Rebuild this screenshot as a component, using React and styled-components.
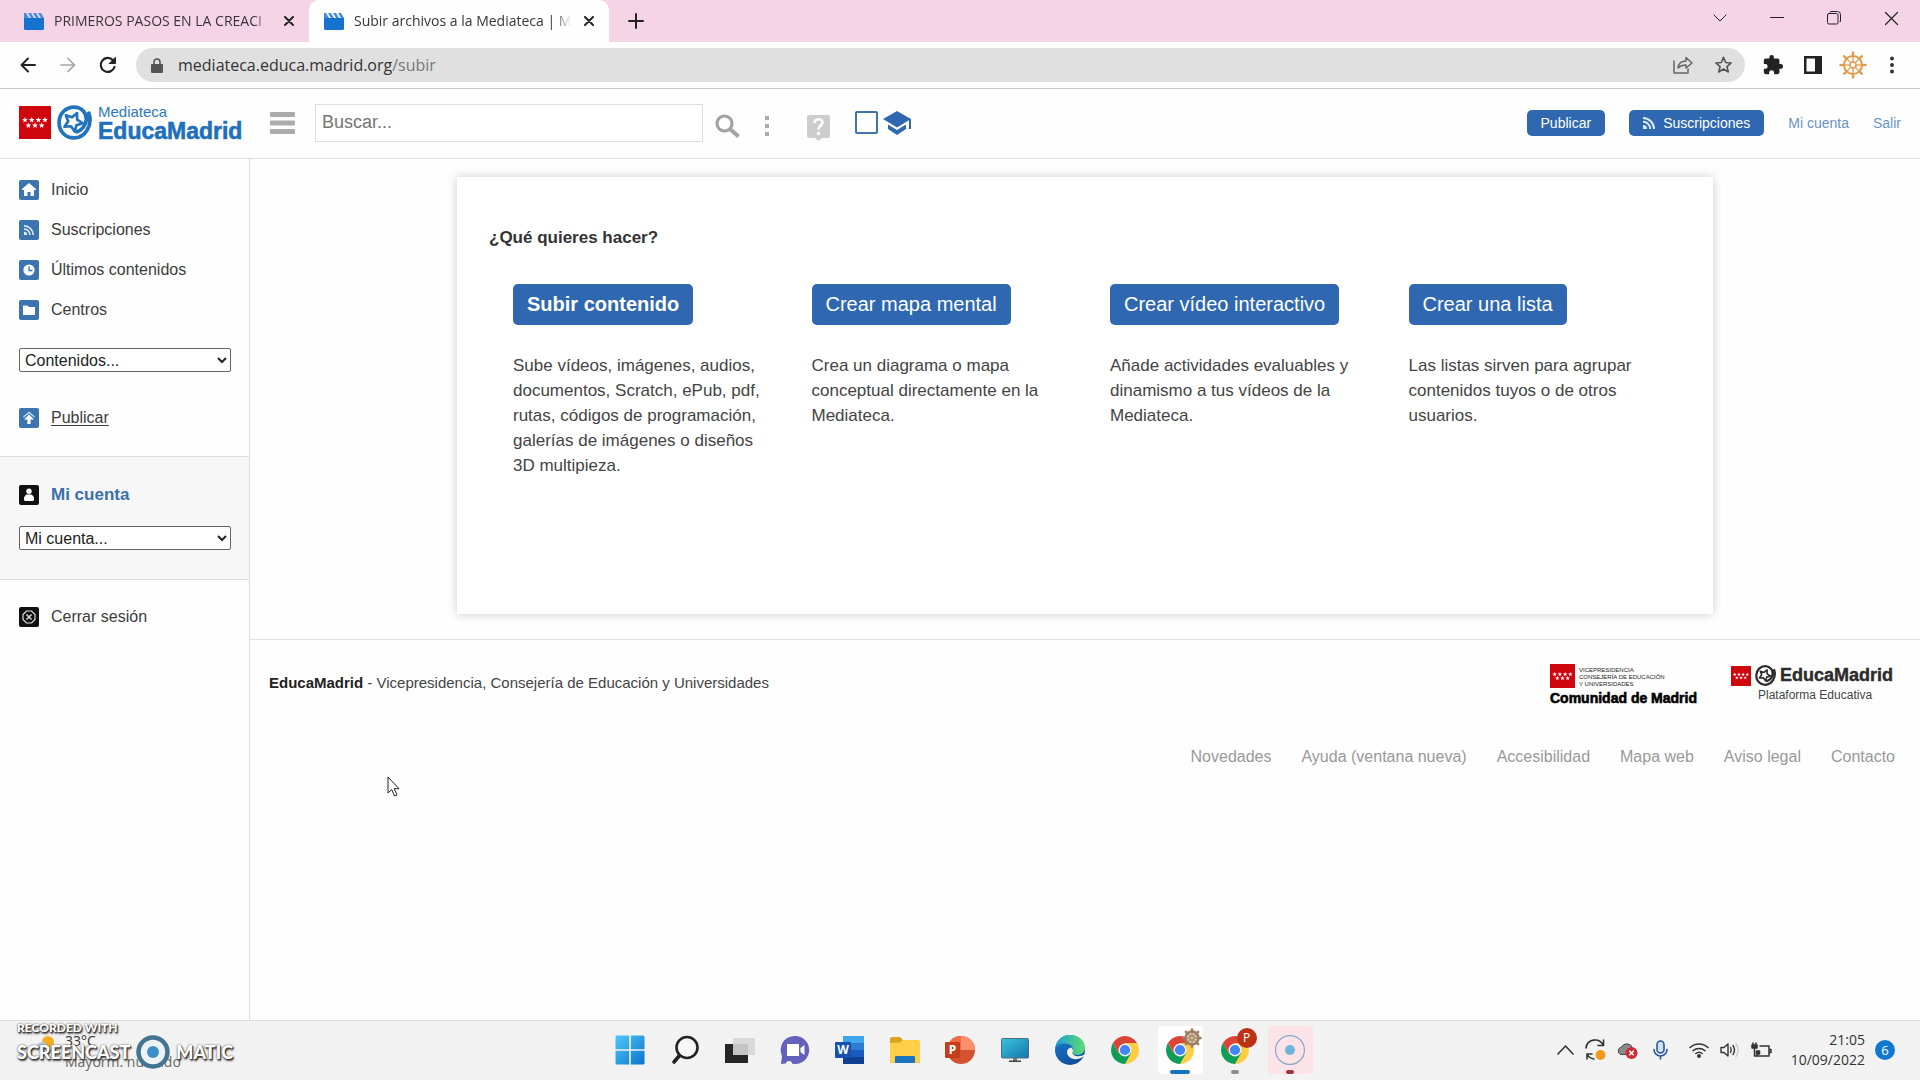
import React from "react";
import styled, { createGlobalStyle, css } from "styled-components";

const sans = `"Liberation Sans", Arial, sans-serif`;
const system = `"Open Sans", "Noto Sans", sans-serif`;
const blue = "#2f68b0";

const GlobalStyle = createGlobalStyle`
  *, *::before, *::after { box-sizing: border-box; }
  body { margin: 0; background: #fefefe; color: #3c3c3c; font: 16px/24px ${sans}; }
  a { color: inherit; text-decoration: none; }
  p, h1 { margin: 0; padding: 0; }
  svg { display: block; flex: none; }
`;

const Screen = styled.div`
  position: relative;
  display: flex;
  flex-direction: column;
  min-height: 100vh;
`;

/* ---------- browser ---------- */

const TabStrip = styled.div`
  display: flex;
  height: 42px;
  background: #f5d5e5;
  font-family: ${system};
`;

const Tab = styled.div`
  display: flex;
  align-items: center;
  width: ${(p) => (p.$active ? 300 : 309)}px;
  padding: 0 14px 0 ${(p) => (p.$active ? 15 : 24)}px;
  border-radius: 10px 10px 0 0;
  background: ${(p) => (p.$active ? "#fefefe" : "transparent")};
`;

const TabTitle = styled.span`
  flex: 1;
  min-width: 0;
  margin: 0 12px 0 10px;
  overflow: hidden;
  white-space: nowrap;
  font-size: 14px;
  line-height: 20px;
  color: #3b3338;
  mask-image: linear-gradient(to right, #000 92%, transparent);
`;

const IconButton = styled.button`
  display: flex;
  align-items: center;
  justify-content: center;
  flex: none;
  width: ${(p) => p.$w || 24}px;
  height: ${(p) => p.$h || 24}px;
  padding: 0;
  border: 0;
  background: none;
  color: ${(p) => p.$color || "#222"};
`;

const WindowControls = styled.div`
  display: flex;
  margin-left: auto;
  height: 36px;
`;

const Toolbar = styled.div`
  display: flex;
  align-items: center;
  height: 47px;
  padding: 0 9px 0 8px;
  background: #fefefe;
  border-bottom: 1px solid #c9c9c9;
`;

const AddressBar = styled.div`
  display: flex;
  align-items: center;
  flex: 1;
  height: 34px;
  margin: 0 8px;
  padding: 0 2px 0 14px;
  border-radius: 17px;
  background: #e0e0e0;
`;

const AddressText = styled.a`
  flex: 1;
  margin-left: 14px;
  font: 16px/24px ${system};
  color: #333;
  span { color: #777; }
`;

/* ---------- site header ---------- */

const Header = styled.header`
  display: flex;
  align-items: center;
  height: 70px;
  padding: 0 19px 2px;
  border-bottom: 1px solid #dedede;
`;

const Brand = styled.a`
  display: flex;
  align-items: center;
  gap: 6px;
  width: 230px;
`;

const BrandText = styled.span`
  display: flex;
  flex-direction: column;
  font-size: 15px;
  line-height: 16px;
  color: #2c78bd;
  strong { font-size: 23px; line-height: 22px; color: #1f70ba; -webkit-text-stroke: 0.6px #1f70ba; }
`;

const SearchForm = styled.form`
  display: flex;
  align-items: center;
`;

const SearchInput = styled.input`
  width: 388px;
  height: 38px;
  padding: 0 6px;
  border: 1px solid #dcdcdc;
  background: #fff;
  font: 18px/24px ${sans};
  color: #666;
  &::placeholder { color: #757575; opacity: 1; }
`;

const HeaderTools = styled.div`
  display: flex;
  align-items: center;
  gap: 25px;
  margin-left: 11px;
  padding-top: 6px;
`;

const HelpButton = styled(IconButton)`
  margin-left: 11px;
  padding-top: 11px;
`;

const EduFilter = styled.label`
  display: flex;
  align-items: center;
  gap: 5px;
  input {
    appearance: none;
    width: 23px;
    height: 23px;
    margin: 0;
    border: 2px solid #3f74ad;
    border-radius: 2px;
    background: #fff;
  }
`;

const UserNav = styled.nav`
  display: flex;
  align-items: center;
  gap: 24px;
  margin-left: auto;
  font-size: 14px;
  line-height: 26px;
  color: #6b93c2;
`;

const solid = css`
  background: ${blue};
  color: #fff;
  border-radius: 5px;
`;

const NavButton = styled.a`
  ${solid}
  display: flex;
  align-items: center;
  gap: 8px;
  height: 26px;
  padding: 0 14px;
`;

/* ---------- body ---------- */

const Body = styled.div`
  display: flex;
  flex: 1;
`;

const Sidebar = styled.aside`
  width: 250px;
  flex: none;
  border-right: 1px solid #dcdcdc;
`;

const Section = styled.div`
  padding: ${(p) => p.$pad};
  background: ${(p) => (p.$tint ? "#f7f7f7" : "transparent")};
  border-bottom: ${(p) => (p.$last ? "0" : "1px solid #dedede")};
`;

const MenuLink = styled.a`
  display: flex;
  align-items: center;
  gap: 12px;
  height: 24px;
  margin-bottom: ${(p) => p.$gap || 0}px;
  text-decoration: ${(p) => (p.$current ? "underline" : "none")};
  text-underline-offset: 2px;
  color: #3c3c3c;
`;

const AccountLink = styled(MenuLink)`
  font-weight: bold;
  font-size: 17px;
  color: #3a70ab;
`;

const Tile = styled.span`
  display: grid;
  place-items: center;
  width: 20px;
  height: 20px;
  border-radius: 2px;
  background: ${(p) => (p.$dark ? "#111" : "#3c74b0")};
`;

const Select = styled.select`
  display: block;
  width: 100%;
  height: 24px;
  margin-bottom: ${(p) => p.$gap}px;
  padding: 0 4px 0 1px;
  border: 1px solid #666;
  border-radius: 2px;
  background: #fff;
  font: 16px/20px ${sans};
  color: #222;
`;

const Main = styled.main`
  flex: 1;
  min-width: 0;
`;

const Card = styled.section`
  max-width: 1256px;
  min-height: 437px;
  margin: 18px auto 25px;
  padding: 49px 30px 49px 32px;
  background: #fff;
  box-shadow: 0 0 10px rgba(0, 0, 0, 0.2);
`;

const CardTitle = styled.h1`
  margin-bottom: 34px;
  font-size: 17px;
  line-height: 24px;
  color: #333;
`;

const Options = styled.div`
  display: grid;
  grid-template-columns: repeat(4, 1fr);
`;

const Option = styled.div`
  padding: 0 24px;
  p { margin-top: 28px; font-size: 17px; line-height: 25px; color: #444; }
`;

const OptionButton = styled.button`
  ${solid}
  height: 41px;
  padding: 0 14px 2px;
  border: 0;
  white-space: nowrap;
  font: ${(p) => (p.$strong ? "bold" : "normal")} 20px/24px ${sans};
`;

const Footer = styled.footer`
  padding: 24px 25px 0 19px;
  border-top: 1px solid #e2e2e2;
`;

const FooterTop = styled.div`
  display: flex;
  justify-content: space-between;
  margin-bottom: 37px;
  p { margin-top: 7px; font-size: 15px; color: #444; }
  strong { color: #222; }
`;

const FooterLogos = styled.div`
  display: flex;
  gap: 34px;
`;

const Regional = styled.a`
  display: flex;
  flex-direction: column;
  width: 147px;
  strong { font-size: 14px; line-height: 20px; white-space: nowrap; color: #000; -webkit-text-stroke: 0.6px #000; }
`;

const RegionalTop = styled.span`
  display: flex;
  align-items: flex-end;
  gap: 4px;
  small { font-size: 6px; line-height: 7px; white-space: nowrap; color: #222; }
`;

const Platform = styled.a`
  display: flex;
  flex-direction: column;
  width: 164px;
  padding-top: 1px;
  small { margin-left: 27px; font-size: 12px; line-height: 18px; color: #444; }
`;

const PlatformTop = styled.span`
  display: flex;
  align-items: center;
  gap: 4px;
  height: 21px;
  strong { font-size: 18px; line-height: 21px; color: #2b2b2b; -webkit-text-stroke: 0.4px #2b2b2b; }
`;

const FooterLinks = styled.nav`
  display: flex;
  justify-content: flex-end;
  gap: 30px;
  color: #999;
`;

const Cursor = styled.svg`
  position: absolute;
  left: 387px;
  top: 776px;
`;

/* ---------- taskbar ---------- */

const Taskbar = styled.div`
  position: relative;
  display: grid;
  grid-template-columns: 1fr auto 1fr;
  height: 60px;
  background: #f2f2f2;
  border-top: 1px solid #dcdcdc;
  font-family: ${system};
  color: #333;
`;

const Weather = styled.div`
  display: flex;
  gap: 8px;
  padding: 9px 0 0 35px;
  font-size: 14px;
  line-height: 21px;
  svg { margin-top: 6px; }
  span { display: block; }
  span + span { color: #666; }
`;

const Watermark = styled.div`
  position: absolute;
  left: 17px;
  top: 0;
  font-family: Lato, ${system};
  font-weight: 900;
  color: #fff;
  text-shadow: 1px 1px 1px #333, 0 0 2px #444, 1px 2px 2px #555;
`;

const WatermarkSmall = styled.div`
  font-size: 12px;
  line-height: 14px;
`;

const WatermarkRow = styled.div`
  display: flex;
  align-items: center;
  gap: 5px;
  height: 34px;
  font-size: 18px;
`;

const Apps = styled.div`
  display: flex;
  align-items: center;
  padding-bottom: 2px;
`;

const AppButton = styled.button`
  position: relative;
  display: grid;
  place-items: center;
  width: 45px;
  height: 48px;
  margin: 0 5px;
  padding: 0;
  border: 0;
  border-radius: 4px;
  background: ${(p) => p.$bg || "transparent"};
`;

const Running = styled.span`
  position: absolute;
  bottom: 0;
  left: calc(50% - ${(p) => p.$w / 2}px);
  width: ${(p) => p.$w}px;
  height: 4px;
  border-radius: 2px;
  background: ${(p) => p.$color};
`;

const Badge = styled.span`
  position: absolute;
  top: 2px;
  right: 1px;
  width: 20px;
  height: 20px;
  border-radius: 50%;
  background: ${(p) => p.$color || "transparent"};
  font: 12px/20px ${system};
  color: #fff;
`;

const Tray = styled.div`
  display: flex;
  align-items: center;
  justify-content: flex-end;
  padding: 0 25px 1px 0;
`;

const TrayIcons = styled.div`
  display: flex;
  align-items: center;
  gap: 11px;
  margin-right: 19px;
`;

const Clock = styled.time`
  font-size: 14px;
  line-height: 20px;
  text-align: right;
  span { display: block; }
`;

const Count = styled.span`
  width: 20px;
  height: 20px;
  margin-left: 10px;
  border-radius: 50%;
  background: #0f78d0;
  font-size: 13px;
  line-height: 20px;
  text-align: center;
  color: #fff;
`;

/* ---------- drawings ---------- */

const line = { fill: "none", stroke: "currentColor", strokeLinecap: "round", strokeLinejoin: "round" };

const Clapper = () => (
  <svg width="20" height="17" viewBox="0 0 20 17">
    <path fill="#1672cf" d="M0 5h20v10.500q0 1.500-1.500 1.500h-17Q0 17 0 15.500z" />
    <path fill="#3f8fdc" d="M0 0h2l3 5H0zM4 0h3l3 5H7zM9 0h3l3 5h-3zM14 0h3l3 5h-3z" />
  </svg>
);

const Cross = ({ size = 10, w = 2 }) => (
  <svg width={size} height={size} viewBox="0 0 10 10" {...line} strokeWidth={w}>
    <path d="M1 1l8 8M9 1l-8 8" />
  </svg>
);

const starPath = (cx, cy, r, inner, rot = -90) => {
  let d = "";
  for (let i = 0; i < 10; i++) {
    const a = ((rot + i * 36) * Math.PI) / 180;
    const q = i % 2 ? inner : r;
    d += `${i ? "L" : "M"}${(cx + q * Math.cos(a)).toFixed(2)} ${(cy + q * Math.sin(a)).toFixed(2)}`;
  }
  return d + "z";
};

const Flag = ({ w, h }) => (
  <svg width={w} height={h} viewBox="0 0 32 33" preserveAspectRatio="none">
    <rect width="32" height="33" fill="#d0060f" />
    {[6, 12.7, 19.4, 26].map((x) => <path key={x} fill="#fff" d={starPath(x, 14, 3, 1.3)} />)}
    {[9.3, 16, 22.7].map((x) => <path key={x} fill="#fff" d={starPath(x, 19.5, 3, 1.3)} />)}
  </svg>
);

const Swirl = ({ size, color }) => (
  <svg width={size} height={size} viewBox="0 0 34 34" fill="none" stroke={color} strokeLinecap="round" strokeLinejoin="round">
    <path strokeWidth="3.600" d="M31 8C35 20 27 32 16.500 32 8 32 2 25.500 2 17S8.500 2 16.500 2C24 2 29 8 28.500 14.500 28 20 24 24.500 19.500 26" />
    <path strokeWidth="2.600" d={starPath(15.5, 16.5, 9.5, 4.6, -65)} />
  </svg>
);

const Rss = ({ size }) => (
  <svg width={size} height={size} viewBox="0 0 12 12" fill="none" stroke="#dcebfa" strokeWidth="2">
    <path d="M0 1a11 11 0 0 1 11 11M0 4.800A7.200 7.200 0 0 1 7.200 12" />
    <path fill="#dcebfa" stroke="none" d="M0 8a4 4 0 0 1 4 4H0z" />
  </svg>
);

const tileIcons = {
  home: <path fill="#fff" d="M7 0l7 6v1h-2v6H8.500V9h-3v4H2V7H0V6z" />,
  clock: <><circle cx="7" cy="7" r="5.600" fill="#fff" /><path d="M7 3.500V7.500h3.500" fill="none" stroke="#3c74b0" strokeWidth="1.300" /></>,
  folder: <path fill="#fff" d="M1 2.500h4.500L7 4h6v8H1z" />,
  up: <><path d="M1.500 6L7 1.500 12.500 6" fill="none" stroke="#bcd6f0" strokeWidth="1.500" /><path fill="#fff" d="M7 3.500l5 5H8.600V13H5.400V8.500H2z" /></>,
  user: <><circle cx="7" cy="3.200" r="2.700" fill="#fff" /><path fill="#fff" d="M4.500 6.500h5Q12 8 12 10v1.500q0 1.500-1.500 1.500h-7Q2 13 2 11.500V10Q2 8 4.500 6.500z" /></>,
  close: <g fill="none" stroke="#ddd" strokeWidth="1.200"><path d="M4.500 1h5L13 4.500v5L9.500 13h-5L1 9.500v-5z" /><path strokeWidth="1.500" d="M4.500 4.500l5 5M9.500 4.500l-5 5" /></g>,
};

const MenuIcon = ({ name, dark }) => (
  <Tile $dark={dark}>
    {name === "rss" ? <Rss size={10} /> : <svg width="14" height="14" viewBox="0 0 14 14">{tileIcons[name]}</svg>}
  </Tile>
);

const Helm = ({ size, color, bold }) => (
  <svg width={size} height={size} viewBox="0 0 28 28" fill="none" stroke={color} strokeWidth={bold ? 3.5 : 2}>
    <circle cx="14" cy="14" r="9" fill={bold ? "#d9c4a8" : "none"} />
    <circle cx="14" cy="14" r="3" strokeWidth="1.500" />
    {[0, 45, 90, 135, 180, 225, 270, 315].map((a) => (
      <g key={a} transform={`rotate(${a} 14 14)`}><path strokeWidth="1.300" d="M14 11V5" /><path strokeWidth={bold ? 3.5 : 2.3} d="M14 5V0.500" /></g>
    ))}
  </svg>
);

const Chrome = () => (
  <svg width="28" height="28" viewBox="0 0 28 28">
    <path fill="#ffcd40" d="M14 7h12.120A14 14 0 0 1 14 28l6-10.500z" />
    <path fill="#0f9d58" d="M1.880 7A14 14 0 0 0 14 28l6-10.500L14 14 8 17.500z" />
    <path fill="#db4437" d="M1.880 7L8 17.500 14 7h12.120A14 14 0 0 0 1.880 7z" />
    <circle cx="14" cy="14" r="6.500" fill="#f2f2f2" />
    <circle cx="14" cy="14" r="5.100" fill="#4285f4" />
  </svg>
);

const TaskIcon = ({ name }) => {
  if (name === "chrome") return <Chrome />;
  const art = {
    windows: (
      <>
        <defs><linearGradient id="win" x2="1" y2="1"><stop stopColor="#52c8f8" /><stop offset="1" stopColor="#0873d0" /></linearGradient></defs>
        <path fill="url(#win)" d="M0.500 2q0-1.500 1.500-1.500h12.200v13.700H0.500zM15.800 0.500H28q1.500 0 1.500 1.500v12.200H15.800zM0.500 15.800h13.700v13.700H2q-1.500 0-1.500-1.500zM15.800 15.800h13.700V28q0 1.500-1.500 1.500H15.800z" />
      </>
    ),
    search: <g fill="none" stroke="#222" strokeLinecap="round"><circle cx="17" cy="12.500" r="10.500" strokeWidth="2.600" fill="#f7f7f7" /><path strokeWidth="3.600" d="M9.500 20.500L4 27" /></g>,
    tasks: <><path fill="#262626" d="M0 9h23v19H0z" /><path fill="#d6d6d6" fillOpacity=".9" d="M8 3h22v17H8z" /></>,
    chat: (
      <>
        <path fill="#6461bd" d="M15 1a14 14 0 1 1-5 27L1 29l1-8A14 14 0 0 1 15 1z" />
        <path fill="#fff" d="M7 9h12v12H7zM20.500 13l4-3v10l-4-3z" /><path fill="#fff" d="M6 29a3 3 0 0 1 6 0z" />
      </>
    ),
    word: (
      <>
        <path fill="#41a5ee" d="M8 1h21v7H8z" /><path fill="#2b7cd3" d="M8 8h21v7H8z" /><path fill="#185abd" d="M8 15h21v7H8z" /><path fill="#103f91" d="M8 22h21v7H8z" />
        <rect y="7" width="16" height="16" rx="1" fill="#1552ac" />
        <text x="8" y="19" textAnchor="middle" fontFamily="Open Sans" fontSize="12" fontWeight="700" fill="#fff">W</text>
      </>
    ),
    folder: <><path fill="#dca321" d="M0 4q0-2 2-2h8l3 3v6H0z" /><path fill="#ffcf48" d="M0 8l10-0.500L13 5h15q2 0 2 2v21H0z" /><path fill="#1b74bd" d="M5 22q0-1 1-1h18q1 0 1 1v6H5z" /></>,
    ppt: (
      <>
        <circle cx="16" cy="15" r="14" fill="#d35230" /><path fill="#ff8f6b" d="M16 1a14 14 0 0 1 14 14H16z" /><path fill="#ed6c47" d="M16 1v14H2A14 14 0 0 1 16 1z" />
        <rect y="7" width="15" height="16" rx="1" fill="#c43e1c" />
        <text x="7.500" y="19" textAnchor="middle" fontFamily="Open Sans" fontSize="12" fontWeight="700" fill="#fff">P</text>
      </>
    ),
    monitor: (
      <>
        <defs><linearGradient id="mon" x2="1" y2="1"><stop stopColor="#3bc2dd" /><stop offset="1" stopColor="#1278ad" /></linearGradient></defs>
        <rect x="1.500" y="3.500" width="27" height="19.500" rx="1" fill="url(#mon)" stroke="#4f6e7c" /><path fill="#777" d="M13 23h4v3h-4z" /><path fill="#444" d="M9 25.500h12V27H9z" />
      </>
    ),
    edge: (
      <>
        <defs>
          <linearGradient id="ea" x2="1"><stop stopColor="#1f9ddb" /><stop offset="1" stopColor="#5fdc6e" /></linearGradient>
          <linearGradient id="eb" x2="0.500" y2="1"><stop stopColor="#1a80d0" /><stop offset="1" stopColor="#0f4f9e" /></linearGradient>
        </defs>
        <circle cx="15" cy="15" r="15" fill="url(#eb)" />
        <path fill="url(#ea)" d="M0.500 12C2 4 8 0 15 0c9 0 15 6 15 12.500 0 5-4 7.500-8 7.500-3 0-5-1-4.500-2.500C19 15 18 9 11 8.500 6 8 2 10 0.500 12z" />
        <path fill="#f2f2f2" d="M16 12.500c-4 1-5 5-3 8 3 4.500 10 5 15.500 1l2 1V19C26 22.500 17 22 17.500 17.500c1-1 .500-4-1.500-5z" />
      </>
    ),
    record: <><circle cx="15" cy="15" r="14.500" fill="none" stroke="#88a9cc" strokeWidth="1.300" /><circle cx="15" cy="15" r="5" fill="#6cb6dd" /></>,
  };
  return <svg width="30" height="30" viewBox="0 0 30 30">{art[name]}</svg>;
};

/* ---------- content ---------- */

const menu = [
  ["home", "Inicio"],
  ["rss", "Suscripciones"],
  ["clock", "Últimos contenidos"],
  ["folder", "Centros"],
];

const options = [
  ["Subir contenido", "Sube vídeos, imágenes, audios, documentos, Scratch, ePub, pdf, rutas, códigos de programación, galerías de imágenes o diseños 3D multipieza."],
  ["Crear mapa mental", "Crea un diagrama o mapa conceptual directamente en la Mediateca."],
  ["Crear vídeo interactivo", "Añade actividades evaluables y dinamismo a tus vídeos de la Mediateca."],
  ["Crear una lista", "Las listas sirven para agrupar contenidos tuyos o de otros usuarios."],
];

const footerLinks = ["Novedades", "Ayuda (ventana nueva)", "Accesibilidad", "Mapa web", "Aviso legal", "Contacto"];
const apps = ["windows", "search", "tasks", "chat", "word", "folder", "ppt", "monitor", "edge", "chrome"];

function BrowserBar() {
  return (
    <>
      <TabStrip>
        <Tab>
          <Clapper />
          <TabTitle>PRIMEROS PASOS EN LA CREACI</TabTitle>
          <IconButton aria-label="Cerrar pestaña" $w={12}><Cross /></IconButton>
        </Tab>
        <Tab $active>
          <Clapper />
          <TabTitle>Subir archivos a la Mediateca | M</TabTitle>
          <IconButton aria-label="Cerrar pestaña" $w={12}><Cross /></IconButton>
        </Tab>
        <IconButton aria-label="Nueva pestaña" $w={54} $h={42}>
          <svg width="16" height="16" viewBox="0 0 16 16" {...line} strokeWidth="2"><path d="M8 1v14M1 8h14" /></svg>
        </IconButton>
        <WindowControls>
          <IconButton aria-label="Buscar pestañas" $w={57} $h={36}><svg width="14" height="8" viewBox="0 0 14 8" {...line}><path d="M1 1l6 6 6-6" /></svg></IconButton>
          <IconButton aria-label="Minimizar" $w={57} $h={36}><svg width="14" height="2" viewBox="0 0 14 2"><path fill="currentColor" d="M0 0h14v1H0z" /></svg></IconButton>
          <IconButton aria-label="Restaurar" $w={57} $h={36}><svg width="14" height="14" viewBox="0 0 14 14" {...line}><rect x=".5" y="2.500" width="10.500" height="10.500" rx="1.500" /><path d="M3 1q0-.5 1-.5h6.500q3 0 3 3V10q0 1-.5 1" /></svg></IconButton>
          <IconButton aria-label="Cerrar" $w={58} $h={36}><Cross size={15} w={0.8} /></IconButton>
        </WindowControls>
      </TabStrip>
      <Toolbar>
        <IconButton aria-label="Atrás" $w={40}><svg width="16" height="16" viewBox="0 0 16 16" {...line} strokeWidth="2"><path d="M15 8H1.500M8 1.500L1.500 8 8 14.500" /></svg></IconButton>
        <IconButton aria-label="Adelante" $w={40} $color="#a5a5a5"><svg width="16" height="16" viewBox="0 0 16 16" {...line} strokeWidth="1.700"><path d="M1 8h13.500M8 1.500L14.500 8 8 14.500" /></svg></IconButton>
        <IconButton aria-label="Recargar" $w={40}><svg width="18" height="18" viewBox="0 0 18 18" {...line} strokeWidth="2.200"><path d="M15.500 11A7 7 0 1 1 14 4.200" /><path fill="currentColor" strokeWidth="1" d="M16.500 1.500v6h-6z" /></svg></IconButton>
        <AddressBar>
          <svg width="14" height="15" viewBox="0 0 14 15"><path fill="#555" d="M2 6h10q1 0 1 1v7q0 1-1 1H2q-1 0-1-1V7q0-1 1-1z" /><path fill="none" stroke="#555" strokeWidth="1.600" d="M4 6V4a3 3 0 0 1 6 0v2" /></svg>
          <AddressText href="#">mediateca.educa.madrid.org<span>/subir</span></AddressText>
          <IconButton aria-label="Compartir" $w={40} $color="#666"><svg width="20" height="18" viewBox="0 0 20 18" {...line} strokeWidth="1.500"><path d="M1 5v12h14v-4M5 12c.5-5 4-7 8-7V1.500l6 5.500-6 5V9c-4 0-6 1-8 3z" /></svg></IconButton>
          <IconButton aria-label="Añadir a marcadores" $w={40} $color="#555"><svg width="19" height="18" viewBox="0 0 20 20" {...line} strokeWidth="1.800"><path d={starPath(10, 10.5, 9, 4)} /></svg></IconButton>
        </AddressBar>
        <IconButton aria-label="Extensiones" $w={40}><svg width="22" height="22" viewBox="0 0 24 24"><path fill="#222" d="M20.500 11H19V7a2 2 0 0 0-2-2h-4V3.500a2.500 2.500 0 0 0-5 0V5H4a2 2 0 0 0-2 2v3.800h1.500a2.700 2.700 0 0 1 0 5.400H2V20a2 2 0 0 0 2 2h3.800v-1.500a2.700 2.700 0 0 1 5.400 0V22H17a2 2 0 0 0 2-2v-4h1.500a2.500 2.500 0 0 0 0-5z" /></svg></IconButton>
        <IconButton aria-label="Panel lateral" $w={40}><svg width="18" height="18" viewBox="0 0 18 18"><path fill="#222" fillRule="evenodd" d="M0 0h18v18H0zM2.500 2.500v13h8.500v-13z" /></svg></IconButton>
        <IconButton aria-label="Perfil" $w={40}><Helm size={28} color="#e09a4c" /></IconButton>
        <IconButton aria-label="Menú" $w={38}><svg width="4" height="18" viewBox="0 0 4 18" fill="#333"><circle cx="2" cy="2.500" r="2" /><circle cx="2" cy="9" r="2" /><circle cx="2" cy="15.500" r="2" /></svg></IconButton>
      </Toolbar>
    </>
  );
}

function SiteHeader() {
  return (
    <Header>
      <Brand href="#" aria-label="Mediateca EducaMadrid">
        <Flag w={32} h={33} />
        <Swirl size={35} color="#2272bd" />
        <BrandText>Mediateca<strong>EducaMadrid</strong></BrandText>
      </Brand>
      <IconButton aria-label="Menú principal" $w={66}>
        <svg width="25" height="22" viewBox="0 0 25 22" fill="#ababab"><rect width="25" height="5" rx="1" /><rect y="8.500" width="25" height="5" rx="1" /><rect y="17" width="25" height="5" rx="1" /></svg>
      </IconButton>
      <SearchForm>
        <SearchInput aria-label="Buscar" type="text" placeholder="Buscar..." />
        <HeaderTools>
          <IconButton type="button" aria-label="Buscar" $w={26}>
            <svg width="25" height="24" viewBox="0 0 25 24" fill="none" stroke="#a3a3a3"><circle cx="9.500" cy="9.500" r="7.500" strokeWidth="3.200" /><path strokeWidth="4" d="M15 15l8.500 7.500" /></svg>
          </IconButton>
          <IconButton type="button" aria-label="Búsqueda avanzada" $w={5}>
            <svg width="5" height="20" viewBox="0 0 5 20" fill="#aaa"><path d="M0 0h4v4H0zM0 8h4v4H0zM0 16h4v4H0z" /></svg>
          </IconButton>
        </HeaderTools>
      </SearchForm>
      <HelpButton aria-label="Ayuda" $w={74} $h={36}>
        <svg width="23" height="26" viewBox="0 0 23 26"><path fill="#cdcdcd" d="M2 0h19q2 0 2 2v19q0 2-2 2h-6l-3.500 3L8 23H2q-2 0-2-2V2q0-2 2-2z" /><path fill="none" stroke="#fff" strokeWidth="2.600" d="M7.500 8c0-5 8-5 8-.500 0 3-4 3-4 7" /><path fill="#fff" d="M10 17h3v3h-3z" /></svg>
      </HelpButton>
      <EduFilter>
        <input type="checkbox" aria-label="Solo contenido educativo" />
        <svg width="28" height="24" viewBox="0 0 28 24"><path fill={blue} d="M14 0l14 8-14 8.500L0 8zM5 13.500l9 5.500 9-5.500V18l-9 6-9-6z" /><path stroke={blue} strokeWidth="2" d="M27 8v10" /></svg>
      </EduFilter>
      <UserNav>
        <NavButton href="#">Publicar</NavButton>
        <NavButton href="#"><Rss size={12} />Suscripciones</NavButton>
        <a href="#">Mi cuenta</a>
        <a href="#">Salir</a>
      </UserNav>
    </Header>
  );
}

function TaskBar() {
  return (
    <Taskbar>
      <Weather>
        <svg width="22" height="14" viewBox="0 0 22 14"><circle cx="13" cy="6" r="6" fill="#f7ac1f" /><path fill="#b9cfdd" d="M3 14a4 4 0 0 1 1-7 5 5 0 0 1 8 2 3 3 0 0 1 1 5z" /></svg>
        <div><span>33°C</span><span>Mayorm. nublado</span></div>
      </Weather>
      <Apps>
        {apps.map((name) => <AppButton key={name} aria-label={name}><TaskIcon name={name} /></AppButton>)}
        <AppButton aria-label="chrome, activo" $bg="#fefefe">
          <Chrome /><Badge><Helm size={20} color="#9c7f63" bold /></Badge><Running $w={20} $color="#1772bd" />
        </AppButton>
        <AppButton aria-label="chrome, segundo perfil">
          <Chrome /><Badge $color="#bb3315">P</Badge><Running $w={8} $color="#8d8d8d" />
        </AppButton>
        <AppButton aria-label="grabadora" $bg="#fbe3e8"><TaskIcon name="record" /><Running $w={8} $color="#9e3441" /></AppButton>
      </Apps>
      <Tray>
        <TrayIcons>
          <svg width="17" height="10" viewBox="0 0 17 10" {...line} strokeWidth="1.600"><path d="M1 9l7.500-8L16 9" /></svg>
          <svg width="21" height="22" viewBox="0 0 21 22" {...line} strokeWidth="1.600"><path d="M1 9a9 9 0 0 1 17-3M18.500 1v5.500H13M2 20v-5h5M2 15a9 9 0 0 0 7 5" /><circle cx="15.500" cy="16" r="5" fill="#f09a1c" stroke="none" /></svg>
          <svg width="21" height="20" viewBox="0 0 21 20"><path fill="#8b8b8b" stroke="#444" d="M3.500 14.500a4 4 0 0 1 1-7.500 6 6 0 0 1 11 1 4 4 0 0 1 1 6.500z" /><circle cx="14.500" cy="13" r="6" fill="#ce2c3c" /><path stroke="#fff" strokeWidth="1.500" d="M12.300 10.800l4.400 4.400M16.700 10.800l-4.400 4.400" /></svg>
          <svg width="28" height="20" viewBox="2 0 28 20" fill="none" stroke="#2b579a" strokeWidth="1.600" strokeLinecap="round"><rect x="10" y="1" width="7" height="12" rx="3.500" fill="#cfe0f5" /><path d="M7 9.500a6.500 6.500 0 0 0 13 0M13.500 16v3" /></svg>
          <svg width="21" height="16" viewBox="-1 0 21 16" {...line} strokeWidth="1.500"><path d="M1 5.500a13 13 0 0 1 18 0M4 8.700a9 9 0 0 1 12 0M6.800 11.500a5 5 0 0 1 6.400 0" /><circle cx="10" cy="14" r="1.200" fill="currentColor" /></svg>
          <svg width="20" height="16" viewBox="0 0 20 16" {...line} strokeWidth="1.400"><path d="M1 5.500h3L8 2v12L4 10.500H1zM10.500 5.500q1.500 2.500 0 5M13 3.500q3 4.500 0 9" /><path stroke="#ccc" d="M16 1.500q4.500 6.500 0 13" /></svg>
          <svg width="21" height="16" viewBox="0 0 21 16" {...line} strokeWidth="1.500"><path d="M9 4h9v10H6v-3M18.500 7.500h1.500v3h-1.500M3.500 6v8H6" /><path fill="currentColor" d="M1 3h5v3H1zM2 1v2M5 1v2M8.500 9h-3v3h3z" /></svg>
        </TrayIcons>
        <Clock><span>21:05</span><span>10/09/2022</span></Clock>
        <Count>6</Count>
      </Tray>
      <Watermark>
        <WatermarkSmall>RECORDED WITH</WatermarkSmall>
        <WatermarkRow>
          SCREENCAST
          <svg width="36" height="36" viewBox="0 0 36 36"><circle cx="18" cy="18" r="14.500" fill="#eef2f5" stroke="#44748f" strokeWidth="4.500" /><circle cx="18" cy="18" r="6" fill="#3d8fcb" /></svg>
          MATIC
        </WatermarkRow>
      </Watermark>
    </Taskbar>
  );
}

export default function App() {
  return (
    <Screen>
      <GlobalStyle />
      <BrowserBar />
      <SiteHeader />
      <Body>
        <Sidebar>
          <Section $pad="19px 18px 26px 19px">
            {menu.map(([icon, label], i) => (
              <MenuLink key={label} href="#" $gap={i === menu.length - 1 ? 26 : 16}><MenuIcon name={icon} />{label}</MenuLink>
            ))}
            <Select $gap={34} aria-label="Contenidos" defaultValue="c"><option value="c">Contenidos...</option></Select>
            <MenuLink href="#" $current><MenuIcon name="up" />Publicar</MenuLink>
          </Section>
          <Section $tint $pad="26px 18px 29px 19px">
            <AccountLink href="#" $gap={19}><MenuIcon name="user" dark />Mi cuenta</AccountLink>
            <Select $gap={0} aria-label="Mi cuenta" defaultValue="m"><option value="m">Mi cuenta...</option></Select>
          </Section>
          <Section $last $pad="25px 18px 0 19px">
            <MenuLink href="#"><MenuIcon name="close" dark />Cerrar sesión</MenuLink>
          </Section>
        </Sidebar>
        <Main>
          <Card>
            <CardTitle>¿Qué quieres hacer?</CardTitle>
            <Options>
              {options.map(([title, text], i) => (
                <Option key={title}>
                  <OptionButton $strong={i === 0}>{title}</OptionButton>
                  <p>{text}</p>
                </Option>
              ))}
            </Options>
          </Card>
          <Footer>
            <FooterTop>
              <p><strong>EducaMadrid</strong> - Vicepresidencia, Consejería de Educación y Universidades</p>
              <FooterLogos>
                <Regional href="#">
                  <RegionalTop><Flag w={25} h={24} /><small>VICEPRESIDENCIA<br />CONSEJERÍA DE EDUCACIÓN<br />Y UNIVERSIDADES</small></RegionalTop>
                  <strong>Comunidad de Madrid</strong>
                </Regional>
                <Platform href="#">
                  <PlatformTop><Flag w={20} h={20} /><Swirl size={21} color="#2b2b2b" /><strong>EducaMadrid</strong></PlatformTop>
                  <small>Plataforma Educativa</small>
                </Platform>
              </FooterLogos>
            </FooterTop>
            <FooterLinks>{footerLinks.map((l) => <a key={l} href="#">{l}</a>)}</FooterLinks>
          </Footer>
        </Main>
      </Body>
      <TaskBar />
      <Cursor width="13" height="21" viewBox="0 0 13 21"><path fill="#fff" stroke="#222" d="M1 1v16l3.700-3.500L7.500 20l2.500-1-2.800-6.300H12z" /></Cursor>
    </Screen>
  );
}
